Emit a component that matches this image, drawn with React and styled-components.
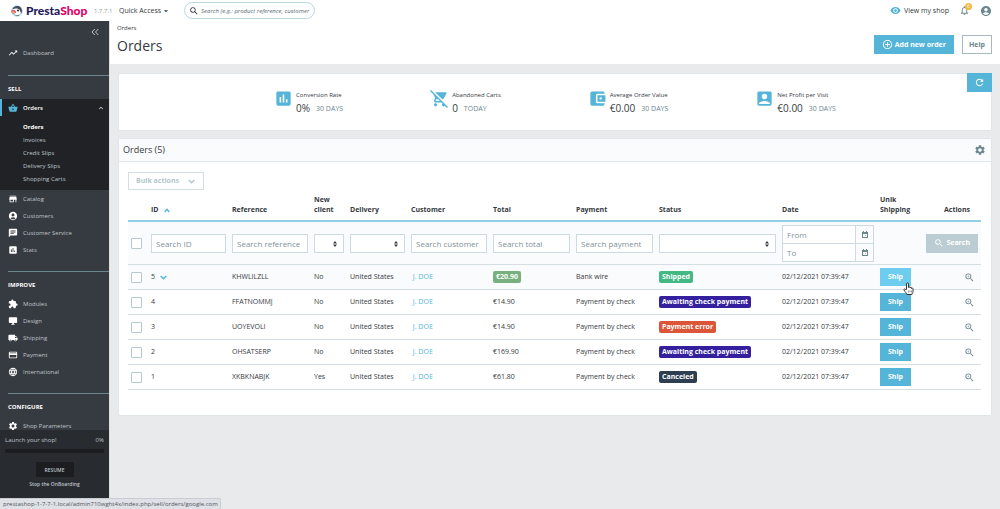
import React from "react";
import styled, { createGlobalStyle } from "styled-components";
import {
	MdAccountBalanceWallet,
	MdAccountBox,
	MdAccountCircle,
	MdAddCircleOutline,
	MdAssessment,
	MdChat,
	MdCreditCard,
	MdDesktopWindows,
	MdExpandLess,
	MdExtension,
	MdLanguage,
	MdLocalShipping,
	MdNotificationsNone,
	MdRefresh,
	MdRemoveRedEye,
	MdRemoveShoppingCart,
	MdSearch,
	MdSettings,
	MdShoppingBasket,
	MdStore,
	MdTrendingUp,
	MdZoomIn,
	MdArrowDropDown,
} from "react-icons/md";

const GlobalStyle = createGlobalStyle`
	* {
		box-sizing: border-box;
		margin: 0;
		padding: 0;
	}

	:root {
		--blue: #54b5d8;
		--text: #363a41;
		--muted: #6c868e;
		--line: #d5dfe3;
	}

	body {
		background: #e9eaec;
		color: var(--text);
		font-family: "Open Sans", "Noto Sans", sans-serif;
		font-size: 7px;
		line-height: 10px;
	}

	button, input, select {
		font: inherit;
		color: inherit;
	}

	button {
		cursor: pointer;
	}

	a {
		color: inherit;
		text-decoration: none;
	}

	ul {
		list-style: none;
	}

	svg {
		display: block;
		flex-shrink: 0;
	}
`;

const Page = styled.div`
	height: 100vh;
	display: flex;
	flex-direction: column;
`;

const Body = styled.div`
	flex: 1;
	min-height: 0;
	display: flex;
`;

const TopBar = styled.header`
	height: 21px;
	padding: 0 8px 0 11px;
	display: flex;
	align-items: center;
	background: #fff;

	.version {
		width: 25px;
		padding-left: 5px;
		font-size: 6px;
		color: #8d9ba0;
	}
`;

const Brand = styled.a`
	width: 78px;
	display: flex;
	align-items: center;
	gap: 3px;
	font-family: Lato, sans-serif;
	font-size: 12px;
	font-weight: 900;
	line-height: 20px;
	color: #251b5b;

	em {
		font-style: normal;
		color: #df0067;
	}
`;

const QuickAccess = styled.button`
	width: 70px;
	padding-left: 5px;
	display: flex;
	align-items: center;
	border: 0;
	background: none;
	white-space: nowrap;
`;

const TopSearch = styled.label`
	width: 131px;
	height: 17px;
	padding: 0 4px;
	display: flex;
	align-items: center;
	gap: 2px;
	border: 1px solid #bbd6de;
	border-radius: 9px;

	input {
		flex: 1;
		min-width: 0;
		border: 0;
		outline: 0;
		background: none;
		font-size: 6px;
		font-style: italic;
	}

	input::placeholder {
		color: #56696f;
		opacity: 1;
	}
`;

const TopActions = styled.div`
	margin-left: auto;
	display: flex;
	align-items: center;
	gap: 10px;

	a {
		display: flex;
		align-items: center;
		gap: 3px;
	}

	button {
		position: relative;
		border: 0;
		background: none;
		color: var(--muted);
	}

	.badge {
		position: absolute;
		top: -2px;
		right: -2px;
		width: 7px;
		height: 7px;
		border-radius: 50%;
		background: #f4b840;
		color: #fff;
		font-size: 5px;
		line-height: 7px;
	}
`;

const Sidebar = styled.aside`
	width: 109px;
	flex-shrink: 0;
	display: flex;
	flex-direction: column;
	background: #363a41;
	color: #bec5ca;
	font-size: 6px;
`;

const Nav = styled.nav`
	flex: 1;
	min-height: 0;
	overflow: hidden;

	.collapse {
		display: block;
		margin: 6px 10px 7px auto;
		border: 0;
		background: none;
	}

	.collapse + ul {
		margin-bottom: 14px;
	}
`;

const NavTitle = styled.h2`
	margin: 13px 0 5px 8px;
	padding-top: 8px;
	border-top: 1px solid #6c868e;
	font-size: 6px;
	font-weight: 700;
	line-height: 10px;
	color: #fff;
`;

const NavLink = styled.a`
	height: 17px;
	padding: 0 4px 0 ${({ $active }) => ($active ? "6px" : "8px")};
	border-left: ${({ $active }) => ($active ? "2px solid var(--blue)" : "0")};
	display: flex;
	align-items: center;
	gap: 5px;
	color: ${({ $active }) => ($active ? "#fff" : "inherit")};
	font-weight: ${({ $active }) => ($active ? "600" : "400")};

	svg:first-child {
		color: ${({ $active }) => ($active ? "var(--blue)" : "#fff")};
	}

	.arrow {
		margin-left: auto;
	}
`;

const ActiveGroup = styled.div`
	background: #202226;

	ul {
		padding: 5px 0 5px 23px;
		display: grid;
		gap: 1px;
	}

	li {
		line-height: 12px;
	}

	li:first-child {
		font-weight: 700;
		color: #fff;
	}
`;

const Onboarding = styled.div`
	height: 79px;
	padding: 5px 5px 0;
	display: flex;
	flex-direction: column;
	align-items: center;
	background: #282b30;

	.row {
		width: 100%;
		display: flex;
		justify-content: space-between;
	}

	progress {
		width: 100%;
		height: 4px;
		margin: 4px 0 9px;
		appearance: none;
		border: 0;
		border-radius: 2px;
		background: #1b1d20;
	}

	progress::-webkit-progress-bar {
		border-radius: 2px;
		background: #1b1d20;
	}

	button {
		width: 38px;
		height: 15px;
		margin-bottom: 2px;
		border: 0;
		background: #1b1d20;
		font-size: 5px;
		font-weight: 600;
	}

	a {
		font-size: 5px;
		font-weight: 600;
	}
`;

const Main = styled.main`
	flex: 1;
	min-width: 0;
	border-left: 1px solid #dcdee1;
`;

const PageHead = styled.div`
	height: 43px;
	padding: 2px 8px 0 7px;
	display: flex;
	justify-content: space-between;
	align-items: flex-start;
	background: #fff;

	.breadcrumb {
		display: block;
		font-size: 6px;
	}

	h1 {
		margin-top: 3px;
		font-size: 14px;
		font-weight: 400;
		line-height: 20px;
	}

	.actions {
		margin-top: 12px;
		display: flex;
		gap: 8px;
	}
`;

const Button = styled.button`
	height: ${({ $small }) => ($small ? "18px" : "19px")};
	padding: 0 ${({ $outline }) => ($outline ? "6px" : "8px")};
	display: inline-flex;
	align-items: center;
	justify-content: center;
	gap: 2px;
	border: ${({ $outline }) => ($outline ? "1px solid #a9b8bd" : "0")};
	background: ${({ $outline, $hover, $disabled }) => {
		if ($outline) return "#fff";
		if ($disabled) return "#bbcdd2";
		return $hover ? "#6ccdef" : "var(--blue)";
	}};
	color: ${({ $outline }) => ($outline ? "var(--muted)" : "#fff")};
	font-size: 7px;
	font-weight: 700;
	white-space: nowrap;
`;

const Content = styled.div`
	padding: 9px 8px 0;
	display: grid;
	gap: 7px;
`;

const Panel = styled.section`
	border-radius: 2px;
	border: 1px solid #e0e5e8;
	background: #fff;
`;

const Kpis = styled(Panel)`
	position: relative;
	height: 58px;
	display: flex;
	justify-content: center;
	gap: 87px;
	padding-top: 15px;

	.refresh {
		position: absolute;
		top: -1px;
		right: -1px;
		width: 25px;
		padding: 0;
	}
`;

const Kpi = styled.div`
	display: flex;
	align-items: flex-start;
	gap: 3px;

	svg {
		color: var(--blue);
	}

	h3 {
		font-size: 6px;
		font-weight: 400;
		line-height: 13px;
	}

	p {
		display: flex;
		align-items: center;
		gap: 6px;
		font-size: 10px;
		line-height: 13px;
	}

	small {
		font-size: 7px;
		color: var(--muted);
	}
`;

const PanelHead = styled.div`
	height: 23px;
	padding: 0 5px 0 4px;
	display: flex;
	align-items: center;
	justify-content: space-between;
	border-bottom: 1px solid #e3e8ea;
	background: #fafbfc;

	h2 {
		font-size: 9px;
		font-weight: 500;
	}

	button {
		border: 0;
		background: none;
		color: var(--muted);
	}
`;

const PanelBody = styled.div`
	padding: 10px 10px 25px 9px;
`;

const BulkButton = styled.button`
	width: 76px;
	height: 18px;
	padding: 0 8px 0 7px;
	display: flex;
	align-items: center;
	justify-content: space-between;
	border: 1px solid #d3dfe3;
	background: #fff;
	color: #b3c7cd;
	font-size: 7px;
	font-weight: 700;
`;

const Table = styled.table`
	width: 100%;
	table-layout: fixed;
	border-collapse: separate;
	border-spacing: 0;

	th {
		height: 32px;
		padding: 0 3px 5px;
		border-bottom: 2px solid #8fd0e6;
		font-weight: 700;
		text-align: left;
		vertical-align: bottom;
	}

	td {
		height: 25px;
		padding: 0 3px;
		border-bottom: 1px solid var(--line);
		white-space: nowrap;
	}

	.filters td {
		height: 43px;
	}

	.filters td,
	.hovered td {
		background: #fafbfc;
	}

	td a {
		color: var(--blue);
	}

	th.actions {
		padding-right: 11px;
		text-align: right;
	}

	td.actions {
		padding-right: 6px;
	}

	.filters .actions {
		padding: 0 3px 0 0;
		text-align: right;
	}

	.actions a {
		display: flex;
		justify-content: flex-end;
		color: var(--muted);
	}

	.cell {
		display: flex;
		align-items: center;
		gap: 5px;
	}

	.cell svg {
		color: var(--blue);
	}
`;

const Check = styled.input`
	display: block;
	width: 11px;
	height: 11px;
	appearance: none;
	border: 1px solid #b5c9cf;
	border-radius: 1px;
	background: #fff;
`;

const Field = styled.input`
	display: block;
	width: 100%;
	min-width: 0;
	height: 19px;
	padding: 0 4px;
	border: 1px solid #cddadf;
	border-radius: 0;
	background: #fff;
	font-size: 8px;

	&::placeholder {
		color: #7f9298;
		opacity: 1;
	}
`;

const SelectBox = styled.div`
	position: relative;

	select {
		display: block;
		width: 100%;
		height: 19px;
		appearance: none;
		border: 1px solid #cddadf;
		background: #fff;
	}

	svg {
		position: absolute;
		top: 7px;
		right: 7px;
		pointer-events: none;
	}
`;

const DateField = styled.label`
	width: 92px;
	display: flex;

	& + & {
		margin-top: -1px;
	}

	span {
		width: 19px;
		margin-left: -1px;
		flex-shrink: 0;
		display: flex;
		align-items: center;
		justify-content: center;
		border: 1px solid #cddadf;
		background: #fafbfc;
		color: var(--muted);
	}
`;

const Tag = styled.span`
	display: inline-block;
	height: 12px;
	padding: 0 3px;
	border-radius: 2px;
	background: ${({ $color }) => $color};
	color: #fff;
	font-size: 7px;
	font-weight: 700;
	line-height: 12px;
	vertical-align: middle;
`;

const ShipCell = styled.div`
	position: relative;
	display: flex;

	.cursor {
		position: absolute;
		top: 14px;
		left: 23px;
		z-index: 1;
	}
`;

const StatusBar = styled.div`
	position: fixed;
	left: 0;
	bottom: 0;
	width: 221px;
	height: 11px;
	padding-left: 3px;
	border: 1px solid #c9ccd2;
	border-width: 1px 1px 0 0;
	border-radius: 0 2px 0 0;
	background: #dee1e6;
	color: #50545a;
	font-size: 6px;
	line-height: 10px;
	white-space: nowrap;
`;

const columns = [
	["", 20],
	["ID", 81],
	["Reference", 82],
	["New client", 36],
	["Delivery", 61],
	["Customer", 82],
	["Total", 83],
	["Payment", 83],
	["Status", 123],
	["Date", 98],
	["Unik Shipping", 47],
	["Actions", 57],
];

const awaiting = { label: "Awaiting check payment", color: "#34209e" };

const orders = [
	{
		id: 5,
		reference: "KHWLILZLL",
		client: "No",
		total: "€20.90",
		paid: true,
		payment: "Bank wire",
		status: { label: "Shipped", color: "#42b883" },
		hovered: true,
	},
	{
		id: 4,
		reference: "FFATNOMMJ",
		client: "No",
		total: "€14.90",
		payment: "Payment by check",
		status: awaiting,
	},
	{
		id: 3,
		reference: "UOYEVOLI",
		client: "No",
		total: "€14.90",
		payment: "Payment by check",
		status: { label: "Payment error", color: "#dc5539" },
	},
	{
		id: 2,
		reference: "OHSATSERP",
		client: "No",
		total: "€169.90",
		payment: "Payment by check",
		status: awaiting,
	},
	{
		id: 1,
		reference: "XKBKNABJK",
		client: "Yes",
		total: "€61.80",
		payment: "Payment by check",
		status: { label: "Canceled", color: "#2c3e50" },
	},
];

const kpis = [
	["Conversion Rate", "0%", "30 DAYS", MdAssessment],
	["Abandoned Carts", "0", "TODAY", MdRemoveShoppingCart],
	["Average Order Value", "€0.00", "30 DAYS", MdAccountBalanceWallet],
	["Net Profit per Visit", "€0.00", "30 DAYS", MdAccountBox],
];

const sellLinks = [
	["Catalog", MdStore],
	["Customers", MdAccountCircle],
	["Customer Service", MdChat],
	["Stats", MdAssessment],
];

const improveLinks = [
	["Modules", MdExtension],
	["Design", MdDesktopWindows],
	["Shipping", MdLocalShipping],
	["Payment", MdCreditCard],
	["International", MdLanguage],
];

const Puffin = () => (
	<svg width="12" height="12" viewBox="0 0 24 24">
		<circle cx="12" cy="12" r="11.5" fill="#a9dcea" />
		<path d="M3 8C5 2 16-1 20 6c3 4 2 9 0 11-2-6-7-9-17-9Z" fill="#4b4858" />
		<path d="M3 10c4-4 12-4 15 1 2 4 1 8-1 10-5 1-9-2-10-5-1-2-2-4-4-6Z" fill="#fff" />
		<circle cx="14" cy="11" r="2" fill="#25202f" />
		<path d="M1 11c4-2 9 0 9 4-2 2-7 3-8 1-1-1-1-3-1-5Z" fill="#df3a6a" />
		<path d="M2 13c2-1 5 0 6 3-2 1-4 1-5 0Z" fill="#f7c14b" />
		<path d="M6 20c4 2 9 1 12-2-1 4-7 6-12 2Z" fill="#4b4858" />
	</svg>
);

const HandCursor = () => (
	<svg className="cursor" width="11" height="13" viewBox="0 0 22 26">
		<path
			d="M7 15V4c0-3 4-3 4 0v7c0-2 3-2 3 0v1c0-2 3-2 3 0v1c0-2 3-1 3 1v5c0 3-2 4-2 6H8c0-2-4-5-6-9-1-2 2-3 3-1Z"
			fill="#fff"
			stroke="#333"
			strokeWidth="2"
			strokeLinejoin="round"
		/>
		<path d="M11 17v4M14 17v4M17 17v4" stroke="#333" strokeWidth="1" />
	</svg>
);

const Chevron = ({ up, width = 7 }) => (
	<svg
		width={width}
		height="5"
		viewBox={`0 0 ${width} 5`}
		fill="none"
		stroke="currentColor"
		strokeWidth="1.4"
	>
		<path
			d={up ? `M.7 4L${width / 2} 1.3 ${width - 0.7} 4` : `M.7 1L${width / 2} 3.800 ${width - 0.7} 1`}
		/>
	</svg>
);

const Calendar = () => (
	<svg width="6" height="7" viewBox="0 0 6 7" fill="currentColor">
		<path d="M1 0h1v1h2V0h1v1h1v6H0V1h1zM1 3v3h4V3z" fillRule="evenodd" />
		<path d="M3 4h1v1H3z" opacity=".6" />
	</svg>
);

const Select = ({ label }) => (
	<SelectBox>
		<select aria-label={label}>
			<option></option>
		</select>
		<svg width="4" height="6" viewBox="0 0 4 6">
			<path d="M2 0l2 2.5H0zM2 6l2-2.5H0z" fill="#363a41" />
		</svg>
	</SelectBox>
);

const NavItem = ({ label, icon: Icon }) => (
	<li>
		<NavLink href="#">
			<Icon size={10} />
			{label}
		</NavLink>
	</li>
);

const Menu = () => (
	<Sidebar>
		<Nav>
			<button className="collapse" aria-label="Collapse menu">
				<svg width="8" height="10" viewBox="0 0 8 10" fill="none" stroke="currentColor">
					<path d="M3.8 2L1 5l2.8 3M7.3 2L4.5 5l2.8 3" />
				</svg>
			</button>
			<ul>
				<NavItem label="Dashboard" icon={MdTrendingUp} />
			</ul>
			<NavTitle>SELL</NavTitle>
			<ActiveGroup>
				<NavLink href="#" $active>
					<MdShoppingBasket size={10} />
					Orders
					<MdExpandLess className="arrow" size={8} />
				</NavLink>
				<ul>
					<li><a href="#">Orders</a></li>
					<li><a href="#">Invoices</a></li>
					<li><a href="#">Credit Slips</a></li>
					<li><a href="#">Delivery Slips</a></li>
					<li><a href="#">Shopping Carts</a></li>
				</ul>
			</ActiveGroup>
			<ul>
				{sellLinks.map(([label, icon]) => (
					<NavItem key={label} label={label} icon={icon} />
				))}
			</ul>
			<NavTitle>IMPROVE</NavTitle>
			<ul>
				{improveLinks.map(([label, icon]) => (
					<NavItem key={label} label={label} icon={icon} />
				))}
			</ul>
			<NavTitle>CONFIGURE</NavTitle>
			<ul>
				<NavItem label="Shop Parameters" icon={MdSettings} />
			</ul>
		</Nav>
		<Onboarding>
			<div className="row">
				<span>Launch your shop!</span>
				<span>0%</span>
			</div>
			<progress value="0" max="100" aria-label="Launch your shop!" />
			<button>RESUME</button>
			<a href="#">Stop the OnBoarding</a>
		</Onboarding>
	</Sidebar>
);

const Filters = () => (
	<tr className="filters">
		<td><Check type="checkbox" aria-label="Select all" /></td>
		<td><Field placeholder="Search ID" aria-label="Search ID" /></td>
		<td><Field placeholder="Search reference" aria-label="Search reference" /></td>
		<td><Select label="New client" /></td>
		<td><Select label="Delivery" /></td>
		<td><Field placeholder="Search customer" aria-label="Search customer" /></td>
		<td><Field placeholder="Search total" aria-label="Search total" /></td>
		<td><Field placeholder="Search payment" aria-label="Search payment" /></td>
		<td><Select label="Status" /></td>
		<td>
			{["From", "To"].map((label) => (
				<DateField key={label}>
					<Field placeholder={label} aria-label={label} />
					<span><Calendar /></span>
				</DateField>
			))}
		</td>
		<td></td>
		<td className="actions">
			<Button $disabled>
				<MdSearch size={10} />
				Search
			</Button>
		</td>
	</tr>
);

const OrderRow = ({ order }) => (
	<tr className={order.hovered ? "hovered" : undefined}>
		<td><Check type="checkbox" aria-label={`Select order ${order.id}`} /></td>
		<td>
			<div className="cell">
				{order.id}
				{order.hovered && <Chevron />}
			</div>
		</td>
		<td>{order.reference}</td>
		<td>{order.client}</td>
		<td>United States</td>
		<td><a href="#">&nbsp;J. DOE</a></td>
		<td>
			{order.paid ? <Tag $color="#78b07d">{order.total}</Tag> : order.total}
		</td>
		<td>{order.payment}</td>
		<td><Tag $color={order.status.color}>{order.status.label}</Tag></td>
		<td>02/12/2021 07:39:47</td>
		<td>
			<ShipCell>
				<Button $small $hover={order.hovered}>Ship</Button>
				{order.hovered && <HandCursor />}
			</ShipCell>
		</td>
		<td className="actions">
			<a href="#" aria-label={`View order ${order.id}`}>
				<MdZoomIn size={11} />
			</a>
		</td>
	</tr>
);

const App = () => {
	return (
		<Page>
			<GlobalStyle />
			<TopBar>
				<Brand href="#">
					<Puffin />
					<span>Presta<em>Shop</em></span>
				</Brand>
				<span className="version">1.7.7.1</span>
				<QuickAccess>
					Quick Access
					<MdArrowDropDown size={10} />
				</QuickAccess>
				<TopSearch>
					<MdSearch size={10} />
					<input
						aria-label="Search"
						placeholder="Search (e.g.: product reference, customer name…)"
					/>
				</TopSearch>
				<TopActions>
					<a href="#">
						<MdRemoveRedEye size={11} color="#54b5d8" />
						View my shop
					</a>
					<button aria-label="Notifications">
						<MdNotificationsNone size={11} />
						<span className="badge">6</span>
					</button>
					<button aria-label="Account">
						<MdAccountCircle size={12} />
					</button>
				</TopActions>
			</TopBar>

			<Body>
				<Menu />
				<Main>
					<PageHead>
						<div>
							<a className="breadcrumb" href="#">Orders</a>
							<h1>Orders</h1>
						</div>
						<div className="actions">
							<Button>
								<MdAddCircleOutline size={11} />
								Add new order
							</Button>
							<Button $outline>Help</Button>
						</div>
					</PageHead>
					<Content>
						<Kpis>
							{kpis.map(([title, value, period, Icon]) => (
								<Kpi key={title}>
									<Icon size={19} />
									<div>
										<h3>{title}</h3>
										<p>
											{value} <small>{period}</small>
										</p>
									</div>
								</Kpi>
							))}
							<Button className="refresh" aria-label="Refresh">
								<MdRefresh size={11} />
							</Button>
						</Kpis>
						<Panel>
							<PanelHead>
								<h2>Orders (5)</h2>
								<button aria-label="Settings"><MdSettings size={12} /></button>
							</PanelHead>
							<PanelBody>
								<BulkButton>
									Bulk actions
									<Chevron />
								</BulkButton>
								<Table>
									<colgroup>
										{columns.map(([name, width]) => (
											<col key={name} width={width} />
										))}
									</colgroup>
									<thead>
										<tr>
											{columns.map(([name]) => (
												<th key={name} className={name === "Actions" ? "actions" : undefined}>
													{name === "ID" ? (
														<div className="cell">
															ID <Chevron up width={6} />
														</div>
													) : (
														name
													)}
												</th>
											))}
										</tr>
									</thead>
									<tbody>
										<Filters />
										{orders.map((order) => (
											<OrderRow key={order.id} order={order} />
										))}
									</tbody>
								</Table>
							</PanelBody>
						</Panel>
					</Content>
				</Main>
			</Body>
			<StatusBar>prestashop-1-7-7-1.local/admin710wght4x/index.php/sell/orders/google.com</StatusBar>
		</Page>
	);
};

export default App;
